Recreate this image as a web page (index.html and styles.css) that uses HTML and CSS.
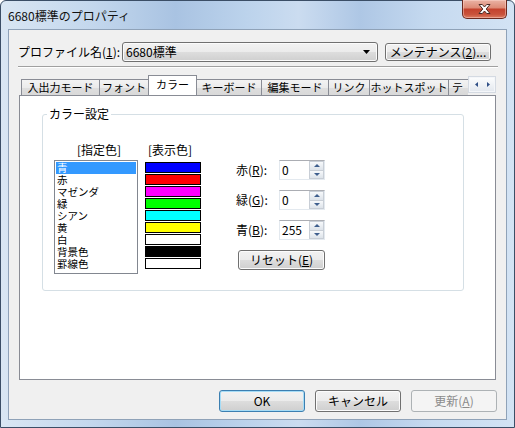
FILE: index.html
```html
<!DOCTYPE html>
<html lang="ja">
<head>
  <meta charset="UTF-8">
  <title>6680標準のプロパティ</title>
  <link rel="stylesheet" href="styles.css">
</head>
<body>
<div class="window">
  <div class="titlebar">
    <span class="title">6680標準のプロパティ</span>
    <button class="close-btn">
      <svg width="13" height="10" viewBox="0 0 13 10"><path d="M1 0.5 H4.3 L6.5 3 L8.7 0.5 H12 L8.2 5 L12 9.5 H8.7 L6.5 7 L4.3 9.5 H1 L4.8 5 Z" fill="#fff" stroke="#4a2b26" stroke-width="1"/></svg>
    </button>
  </div>
  <div class="client">
    <div class="profile-row">
      <span class="profile-label">プロファイル名(<u>1</u>):</span>
      <div class="combo">
        <span>6680標準</span>
        <svg width="7" height="4" viewBox="0 0 7 4"><path d="M0 0 H7 L3.5 4 Z" fill="#000"/></svg>
      </div>
      <button class="btn maint-btn">メンテナンス(<u>2</u>)...</button>
    </div>
    <div class="separator"></div>

    <div class="tab-row">
      <div class="tabs">
        <div class="tab tab-io">入出力モード</div>
        <div class="tab tab-font">フォント</div>
        <div class="tab tab-color active">カラー</div>
        <div class="tab tab-key">キーボード</div>
        <div class="tab tab-edit">編集モード</div>
        <div class="tab tab-link">リンク</div>
        <div class="tab tab-hot">ホットスポット</div>
        <div class="tab tab-more">テ</div>
      </div>
      <div class="tab-scroll">
        <span class="scroll-btn"><svg width="3" height="5" viewBox="0 0 3 5"><path d="M3 0 V5 L0 2.5 Z" fill="#2f4f86"/></svg></span>
        <span class="scroll-btn"><svg width="3" height="5" viewBox="0 0 3 5"><path d="M0 0 V5 L3 2.5 Z" fill="#2f4f86"/></svg></span>
      </div>
    </div>

    <div class="panel">
      <fieldset class="group">
        <legend>カラー設定</legend>
        <div class="color-body">
          <div class="color-col list-col">
            <div class="col-head">[指定色]</div>
            <div class="color-list">
              <div class="item selected">青</div>
              <div class="item">赤</div>
              <div class="item">マゼンダ</div>
              <div class="item">緑</div>
              <div class="item">シアン</div>
              <div class="item">黄</div>
              <div class="item">白</div>
              <div class="item">背景色</div>
              <div class="item">罫線色</div>
            </div>
          </div>
          <div class="color-col swatch-col">
            <div class="col-head">[表示色]</div>
            <div class="swatches">
              <div class="swatch sw-blue"></div>
              <div class="swatch sw-red"></div>
              <div class="swatch sw-magenta"></div>
              <div class="swatch sw-green"></div>
              <div class="swatch sw-cyan"></div>
              <div class="swatch sw-yellow"></div>
              <div class="swatch sw-white"></div>
              <div class="swatch sw-black"></div>
              <div class="swatch sw-white"></div>
            </div>
          </div>
          <div class="rgb">
            <div class="rgb-row">
              <span class="rgb-label">赤(<u>R</u>):</span>
              <div class="spin"><span class="spin-val">0</span><span class="spin-btns"><span class="spin-up"></span><span class="spin-down"></span></span></div>
            </div>
            <div class="rgb-row">
              <span class="rgb-label">緑(<u>G</u>):</span>
              <div class="spin"><span class="spin-val">0</span><span class="spin-btns"><span class="spin-up"></span><span class="spin-down"></span></span></div>
            </div>
            <div class="rgb-row">
              <span class="rgb-label">青(<u>B</u>):</span>
              <div class="spin"><span class="spin-val">255</span><span class="spin-btns"><span class="spin-up"></span><span class="spin-down"></span></span></div>
            </div>
            <button class="btn reset-btn">リセット(<u>E</u>)</button>
          </div>
        </div>
      </fieldset>
    </div>

    <div class="button-row">
      <button class="btn default">OK</button>
      <button class="btn">キャンセル</button>
      <button class="btn disabled">更新(<u>A</u>)</button>
    </div>
  </div>
</div>
</body>
</html>
```

FILE: styles.css
```css
* { box-sizing: border-box; }
html, body {
  margin: 0;
  height: 100%;
  overflow: hidden;
}
body {
  font-family: "Noto Sans CJK JP", "Noto Sans", sans-serif;
  font-size: 12px;
  color: #000;
  background: #fff;
}

.window {
  width: 515px;
  height: 428px;
  display: flex;
  flex-direction: column;
  padding: 0 7px 7px 7px;
  border: 1px solid #3b4e66;
  border-radius: 6px 6px 0 0;
  background:
    linear-gradient(90deg, #d9e6f3 0%, #c3d7ed 18%, #a9c3e2 34%, #bcd3ec 48%, #cbdcf0 58%, #aec7e5 70%, #c6daf0 84%, #d3e3f4 100%);
}

.titlebar {
  height: 28px;
  display: flex;
  align-items: center;
  justify-content: space-between;
}
.title {
  font-size: 12px;
  color: #111;
  padding-top: 1px;
}
.close-btn {
  align-self: flex-start;
  width: 45px;
  height: 19px;
  margin-top: -1px;
  padding: 0;
  display: flex;
  align-items: center;
  justify-content: center;
  border: 1px solid #6b2a20;
  border-top: none;
  border-radius: 0 0 5px 5px;
  background: linear-gradient(#eab3a5 0%, #de8c78 42%, #c4432e 52%, #c9533c 80%, #dc7d62 100%);
  box-shadow: inset 0 0 0 1px rgba(255, 220, 210, 0.45);
}

.client {
  flex: 1;
  display: flex;
  flex-direction: column;
  border: 1px solid #8fa2b8;
  background: #f0f0f0;
}

.profile-row {
  display: flex;
  align-items: center;
  height: 20px;
  margin: 12px 0 0 9px;
}
.profile-label {
  width: 104px;
  line-height: 14px;
}
.combo {
  width: 256px;
  height: 20px;
  display: flex;
  align-items: center;
  justify-content: space-between;
  padding: 0 7px 0 3px;
  border: 1px solid #707070;
  border-radius: 3px;
  background: linear-gradient(#f2f2f2 0%, #ebebeb 50%, #dddddd 51%, #cfcfcf 100%);
  box-shadow: inset 0 0 0 1px #fbfbfb;
  line-height: 14px;
}

.btn {
  font: inherit;
  color: #000;
  padding: 0;
  line-height: 14px;
  border: 1px solid #707070;
  border-radius: 3px;
  background: linear-gradient(#f2f2f2 0%, #ebebeb 50%, #dddddd 51%, #cfcfcf 100%);
  box-shadow: inset 0 0 0 1px #fcfcfc;
}
.btn.default {
  border-color: #3c7fb1;
  box-shadow: inset 0 0 0 1px #a6dcf6;
}
.btn.disabled {
  color: #8b8b8b;
  border-color: #adb2b5;
  background: #f4f4f4;
  box-shadow: none;
}
.maint-btn {
  width: 106px;
  height: 18px;
  margin-left: 7px;
}

.separator {
  margin: 4px 0 0 9px;
  width: 480px;
  height: 2px;
  border-top: 1px solid #a0a0a0;
  border-bottom: 1px solid #fff;
}

.tab-row {
  display: flex;
  align-items: flex-end;
  width: 477px;
  height: 21px;
  margin: 7px 0 0 10px;
  padding: 0 0 1px 2px;
}
.tabs {
  flex: 1;
  display: flex;
  align-items: flex-end;
  height: 20px;
  overflow: hidden;
}
.tab {
  flex-shrink: 0;
  height: 16px;
  margin-right: -1px;
  font-size: 11px;
  text-align: center;
  line-height: 15px;
  border: 1px solid #898c95;
  border-bottom: none;
  background: linear-gradient(#f3f3f3 0%, #ebebeb 50%, #dedede 51%, #d9d9d9 100%);
  white-space: nowrap;
}
.tab.active {
  position: relative;
  z-index: 2;
  height: 21px;
  margin-bottom: -1px;
  line-height: 17px;
  background: #fff;
}
.tab-io { width: 79px; }
.tab-font { width: 50px; }
.tab-color { width: 49px; }
.tab-key { width: 66px; }
.tab-edit { width: 68px; }
.tab-link { width: 42px; }
.tab-hot { width: 80px; }
.tab-more { width: 20px; text-align: left; padding-left: 3px; border-right: none; }

.tab-scroll {
  align-self: flex-start;
  display: flex;
  width: 28px;
  height: 17px;
  margin-top: 1px;
  padding: 1px;
  background: #f4f6f9;
  border: 1px solid #d4dae2;
}
.scroll-btn {
  flex: 1;
  display: flex;
  align-items: center;
  justify-content: center;
  background: linear-gradient(#fbfcfd, #e4e9ef);
}

.panel {
  width: 477px;
  height: 285px;
  margin: -1px 0 0 10px;
  border: 1px solid #898c95;
  background: #fff;
  padding: 0 0 0 22px;
}

.group {
  width: 422px;
  height: 184px;
  margin: 11px 0 0 0;
  padding: 0;
  border: 1px solid #d5dfe5;
  border-radius: 3px;
}
.group legend {
  margin-left: 4px;
  padding: 0 2px;
  line-height: 14px;
}

.color-body {
  display: flex;
  padding: 22px 0 0 11px;
}
.color-col {
  display: flex;
  flex-direction: column;
}
.col-head {
  line-height: 14px;
  height: 14px;
  text-align: center;
  padding-left: 6px;
}
.list-col { width: 84px; }
.color-list {
  height: 114px;
  margin-top: 3px;
  padding: 1px;
  border: 1px solid #828790;
}
.item {
  height: 12px;
  font-family: "Liberation Sans", "Noto Sans CJK JP", sans-serif;
  font-size: 10.5px;
  line-height: 12px;
  padding-left: 1px;
  white-space: nowrap;
}
.item.selected {
  background: #3399ff;
  color: #fff;
}

.swatch-col {
  width: 56px;
  margin-left: 7px;
}
.swatch-col .col-head { padding-left: 0; margin-left: -6px; }
.swatches {
  margin-top: 5px;
}
.swatch {
  height: 11px;
  margin-bottom: 1px;
  border: 1px solid #000;
}
.sw-blue { background: #0000ff; }
.sw-red { background: #ff0000; }
.sw-magenta { background: #ff00ff; }
.sw-green { background: #00ff00; }
.sw-cyan { background: #00ffff; }
.sw-yellow { background: #ffff00; }
.sw-white { background: #fff; }
.sw-black { background: #000; }

.rgb {
  display: flex;
  flex-direction: column;
  gap: 10px;
  margin: 17px 0 0 35px;
}
.rgb-row {
  display: flex;
  align-items: center;
  height: 20px;
}
.rgb-label {
  width: 43px;
  line-height: 14px;
}
.spin {
  display: flex;
  width: 46px;
  height: 20px;
  border: 1px solid #e3e9ef;
  border-top-color: #abadb3;
  background: #fff;
}
.spin-val {
  flex: 1;
  padding-left: 2px;
  line-height: 18px;
}
.spin-btns {
  display: flex;
  flex-direction: column;
  width: 15px;
}
.spin-up, .spin-down {
  flex: 1;
  display: flex;
  align-items: center;
  justify-content: center;
  border: 1px solid #c8ced6;
  background: linear-gradient(#f7f9fb, #dde3ea);
}
.spin-down { border-top: none; }
.spin-up::after, .spin-down::after {
  content: "";
  border-left: 3px solid transparent;
  border-right: 3px solid transparent;
}
.spin-up::after { border-bottom: 3px solid #3f5f8e; }
.spin-down::after { border-top: 3px solid #3f5f8e; }

.reset-btn {
  width: 87px;
  height: 20px;
  margin-left: 2px;
}

.button-row {
  display: flex;
  justify-content: flex-end;
  gap: 10px;
  margin: 10px 9px 0 0;
}
.button-row .btn {
  width: 86px;
  height: 22px;
}
```
